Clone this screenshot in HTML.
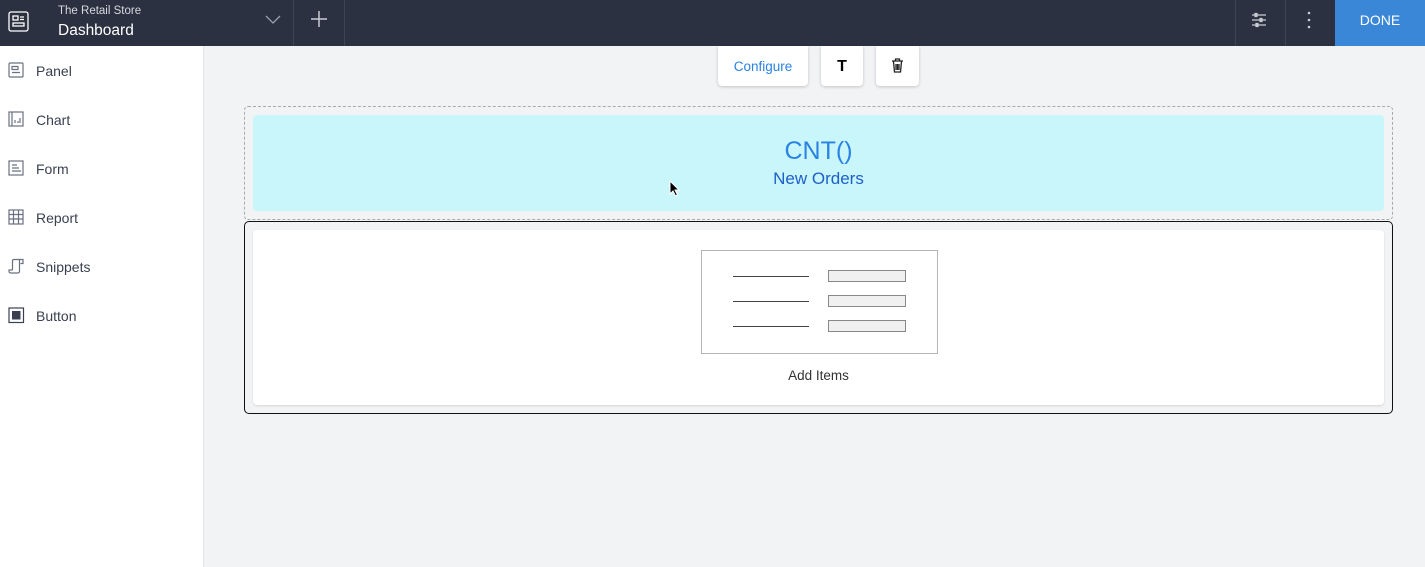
<!DOCTYPE html>
<html><head><style>
*{margin:0;padding:0;box-sizing:border-box}
body{width:1425px;height:567px;overflow:hidden;background:#f2f3f5;font-family:"Liberation Sans",sans-serif;position:relative}
.top{position:absolute;left:0;top:0;width:1425px;height:46px;background:#2b3140}
.abs{position:absolute}
.side{position:absolute;left:0;top:46px;width:204px;height:521px;background:#fff;border-right:1px solid #e3e4e8}
.item{position:absolute;left:36px;font-size:14px;color:#3a4050}
.ic{position:absolute;left:8px}
.btn{position:absolute;top:46px;height:40px;background:#fff;border-radius:0 0 4px 4px;box-shadow:0 1px 3px rgba(0,0,0,.2)}
</style></head><body>
<div class="top">
 <svg class="abs" style="left:8px;top:11px" width="21" height="21" viewBox="0 0 21 21" fill="none" stroke="#fff" stroke-width="1.3"><rect x="1" y="1" width="19" height="19" rx="2"/><rect x="5" y="5" width="5" height="4"/><path d="M12 6h4M12 8.5h4"/><rect x="5" y="12" width="11" height="3"/></svg>
 <div class="abs" style="left:58px;top:5px;color:#d6d9e0;font-size:11.5px">The Retail Store</div>
 <div class="abs" style="left:58px;top:22px;color:#fff;font-size:15.5px">Dashboard</div>
 <svg class="abs" style="left:265px;top:15px" width="16" height="10" fill="none" stroke="#9aa0ad" stroke-width="1.3"><path d="M1 1l7 7 7-7"/></svg>
 <div class="abs" style="left:293px;top:0;width:1px;height:46px;background:#3d4452"></div>
 <svg class="abs" style="left:310px;top:10px" width="18" height="18" stroke="#c8ccd4" stroke-width="1.5"><path d="M9 1v16M1 9h16"/></svg>
 <div class="abs" style="left:344px;top:0;width:1px;height:46px;background:#3d4452"></div>
 <div class="abs" style="left:1235px;top:0;width:1px;height:46px;background:#3d4452"></div>
 <svg class="abs" style="left:1251px;top:12px" width="16" height="16" stroke="#c8ccd4" stroke-width="1.2" fill="#c8ccd4"><path d="M1 3h14M1 8h14M1 13h14"/><rect x="4" y="1.5" width="2" height="3"/><rect x="9" y="6.5" width="2" height="3"/><rect x="5" y="11.5" width="2" height="3"/></svg>
 <div class="abs" style="left:1285px;top:0;width:1px;height:46px;background:#3d4452"></div>
 <svg class="abs" style="left:1307px;top:11px" width="4" height="18" fill="#c8ccd4"><circle cx="2" cy="2" r="1.3"/><circle cx="2" cy="9" r="1.3"/><circle cx="2" cy="16" r="1.3"/></svg>
 <div class="abs" style="left:1335px;top:0;width:90px;height:46px;background:#3a87d8;color:#fff;font-size:14px;line-height:41px;text-align:center">DONE</div>
</div>
<div class="side">
 <svg class="ic" style="top:16px" width="17" height="17" fill="none" stroke="#6a7080" stroke-width="1.2"><rect x="1" y="1" width="14" height="14" rx="1"/><path d="M4 4.5h6v3H4zM4 10.5h8"/></svg>
 <div class="item" style="top:17px">Panel</div>
 <svg class="ic" style="top:65px" width="17" height="17" fill="none" stroke="#6a7080" stroke-width="1.2"><rect x="1" y="1" width="14" height="14"/><path d="M4 1v14M7 12V9M10 12V10M12 12V7"/></svg>
 <div class="item" style="top:66px">Chart</div>
 <svg class="ic" style="top:114px" width="17" height="17" fill="none" stroke="#6a7080" stroke-width="1.2"><rect x="1" y="1" width="14" height="14"/><path d="M4 5h5M4 8h7M4 11h9"/></svg>
 <div class="item" style="top:115px">Form</div>
 <svg class="ic" style="top:163px" width="17" height="17" fill="none" stroke="#6a7080" stroke-width="1.2"><rect x="1" y="1" width="14" height="14"/><path d="M5.5 1v14M10.5 1v14M1 5.5h14M1 10h14"/></svg>
 <div class="item" style="top:164px">Report</div>
 <svg class="ic" style="top:212px" width="17" height="17" fill="none" stroke="#6a7080" stroke-width="1.2"><path d="M4.5 12V3Q4.5 1.5 6 1.5H15v4h-2.5M4.5 12H1v1Q1 15 3 15h6.5Q11.5 15 11.5 13V2"/></svg>
 <div class="item" style="top:213px">Snippets</div>
 <svg class="ic" style="top:261px" width="17" height="17"><rect x="1" y="1" width="14.5" height="14.5" fill="none" stroke="#3a4050" stroke-width="1.2"/><rect x="4" y="4" width="8.5" height="8.5" fill="#3a4050"/></svg>
 <div class="item" style="top:262px">Button</div>
</div>
<div class="btn" style="left:718px;width:90px;color:#2a82e4;font-size:13.5px;line-height:42px;text-align:center">Configure</div>
<div class="btn" style="left:821px;width:42px;font-weight:bold;font-size:16px;line-height:41px;text-align:center">T</div>
<div class="btn" style="left:876px;width:43px">
 <svg class="abs" style="left:15px;top:12px" width="13" height="15" fill="none" stroke="#222" stroke-width="1.3"><path d="M1 3h11M4.5 3V1h4v2M2.5 3.5l1 10.5h6l1-10.5M5 6v6M6.5 6v6M8 6v6"/></svg>
</div>
<div class="abs" style="left:244px;top:106px;width:1149px;height:114px;border:1px dashed #aaa;border-radius:4px"></div>
<div class="abs" style="left:253px;top:115px;width:1131px;height:96px;background:#c8f6fa;border-radius:4px;text-align:center">
 <div style="color:#2a82e4;font-size:25px;margin-top:22px">CNT()</div>
 <div style="color:#1f5fc8;font-size:17px;margin-top:3px">New Orders</div>
</div>
<svg class="abs" style="left:669px;top:180px" width="12" height="18"><path d="M1 1v13l3-3 2.5 5 2-1-2.5-5h4z" fill="#000" stroke="#fff" stroke-width="1"/></svg>
<div class="abs" style="left:244px;top:221px;width:1149px;height:193px;border:1px solid #111;border-radius:5px"></div>
<div class="abs" style="left:253px;top:230px;width:1131px;height:175px;background:#fff;border-radius:4px;box-shadow:0 1px 2px rgba(0,0,0,.12)"></div>
<div class="abs" style="left:701px;top:250px;width:237px;height:104px;border:1px solid #b5b5b5"></div>
<div class="abs" style="left:733px;top:276px;width:76px;height:1px;background:#444"></div>
<div class="abs" style="left:733px;top:301px;width:76px;height:1px;background:#444"></div>
<div class="abs" style="left:733px;top:326px;width:76px;height:1px;background:#444"></div>
<div class="abs" style="left:828px;top:270px;width:78px;height:12px;border:1px solid #888;background:#f0f0f0"></div>
<div class="abs" style="left:828px;top:295px;width:78px;height:12px;border:1px solid #888;background:#f0f0f0"></div>
<div class="abs" style="left:828px;top:320px;width:78px;height:12px;border:1px solid #888;background:#f0f0f0"></div>
<div class="abs" style="left:700px;top:368px;width:237px;text-align:center;font-size:13.5px;color:#333">Add Items</div>
</body></html>
